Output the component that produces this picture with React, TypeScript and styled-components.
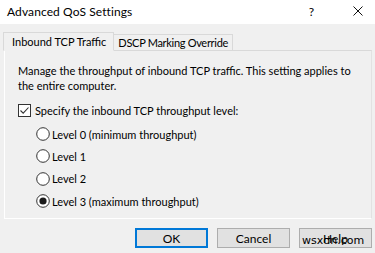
import styled, { createGlobalStyle } from "styled-components";

const GlobalStyle = createGlobalStyle`
  html, body {
    margin: 0;
    padding: 0;
    background: #f0f0f0;
  }
  body {
    font-family: Lato, "Liberation Sans", sans-serif;
    font-size: 11px;
    color: #000;
  }
`;

const levels = [
  "Level 0 (minimum throughput)",
  "Level 1",
  "Level 2",
  "Level 3 (maximum throughput)",
];

function App() {
  return (
    <Window>
      <GlobalStyle />
      <TitleBar>
        <Title>Advanced QoS Settings</Title>
        <TitleButtons>
          <HelpMark>?</HelpMark>
          <CloseIcon viewBox="0 0 10 10">
            <path d="M0.5 0.5 L9.5 9.5 M9.5 0.5 L0.5 9.5" stroke="#111" strokeWidth="1" />
          </CloseIcon>
        </TitleButtons>
      </TitleBar>
      <Body>
        <TabStrip>
          <Tab active>Inbound TCP Traffic</Tab>
          <Tab>DSCP Marking Override</Tab>
        </TabStrip>
        <Panel>
          <Description>
            Manage the throughput of inbound TCP traffic. This setting applies to
            the entire computer.
          </Description>
          <CheckRow>
            <CheckBox viewBox="0 0 13 13">
              <rect x="0.5" y="0.5" width="12" height="12" fill="#fff" stroke="#333" />
              <path d="M2.5 6.5 L5.2 9.2 L10.5 3.5" fill="none" stroke="#333" strokeWidth="1.1" />
            </CheckBox>
            <span>Specify the inbound TCP throughput level:</span>
          </CheckRow>
          <RadioList>
            {levels.map((label, i) => (
              <RadioRow key={label}>
                <Radio viewBox="0 0 14 14">
                  <circle cx="7" cy="7" r="6.3" fill="#fff" stroke="#333" strokeWidth="1" />
                  {i === 3 && <circle cx="7" cy="7" r="3.6" fill="#1a1a1a" />}
                </Radio>
                <span>{label}</span>
              </RadioRow>
            ))}
          </RadioList>
        </Panel>
        <ButtonRow>
          <Button primary>OK</Button>
          <Button>Cancel</Button>
          <Button>Help</Button>
        </ButtonRow>
        <Watermark>wsxdn.com</Watermark>
      </Body>
    </Window>
  );
}

const Window = styled.div`
  width: 375px;
  height: 253px;
  overflow: hidden;
  background: #f0f0f0;
  position: relative;
`;

const TitleBar = styled.div`
  height: 24px;
  box-sizing: border-box;
  background: #fff;
  display: flex;
  align-items: center;
  justify-content: space-between;
  padding: 0 12px 2px 7px;
`;

const Title = styled.span`
  font-size: 12px;
  letter-spacing: 0.1px;
`;

const TitleButtons = styled.div`
  display: flex;
  align-items: center;
  gap: 39px;
`;

const HelpMark = styled.span`
  font-size: 12px;
`;

const CloseIcon = styled.svg`
  width: 10px;
  height: 10px;
`;

const Body = styled.div`
  padding: 8px 3px 0 4px;
`;

const TabStrip = styled.div`
  display: flex;
  align-items: flex-end;
  height: 18px;
  margin-left: -1px;
`;

const Tab = styled.div<{ active?: boolean }>`
  height: ${(p) => (p.active ? 19 : 16)}px;
  display: flex;
  align-items: center;
  padding: ${(p) => (p.active ? "0 7px 1px 8px" : "0 4px")};
  letter-spacing: ${(p) => (p.active ? 0 : -0.3)}px;
  background: #f0f0f0;
  border: 1px solid #d9d9d9;
  border-bottom: ${(p) => (p.active ? "1px solid #f0f0f0" : "none")};
  margin-bottom: ${(p) => (p.active ? -1 : 0)}px;
  margin-left: ${(p) => (p.active ? 0 : -1)}px;
  position: relative;
  z-index: ${(p) => (p.active ? 1 : 0)};
  box-sizing: border-box;
`;

const Panel = styled.div`
  height: 169px;
  box-sizing: border-box;
  border: 1px solid #fff;
  border-top-color: #d9d9d9;
  border-right-color: #e2e2e2;
  padding: 12px 12px 0 13px;
`;

const Description = styled.p`
  margin: 0;
  line-height: 15px;
`;

const CheckRow = styled.label`
  display: flex;
  align-items: center;
  gap: 4px;
  margin-top: 10px;
  height: 15px;
`;

const CheckBox = styled.svg`
  width: 13px;
  height: 13px;
  flex: none;
`;

const RadioList = styled.div`
  display: flex;
  flex-direction: column;
  gap: 7.4px;
  margin-top: 8.5px;
  padding-left: 18px;
`;

const RadioRow = styled.label`
  display: flex;
  align-items: center;
  gap: 2px;
  height: 15px;
`;

const Radio = styled.svg`
  width: 14px;
  height: 14px;
  flex: none;
`;

const ButtonRow = styled.div`
  display: flex;
  justify-content: flex-end;
  gap: 9px;
  margin-top: 9px;
`;

const Button = styled.div<{ primary?: boolean }>`
  width: 73px;
  height: 20px;
  box-sizing: border-box;
  display: flex;
  align-items: center;
  justify-content: center;
  background: #e1e1e1;
  border: ${(p) => (p.primary ? "2px solid #0078d7" : "1px solid #adadad")};
  font-size: 12px;
`;

const Watermark = styled.span`
  position: absolute;
  left: 302px;
  top: 234px;
  font-family: "DejaVu Sans", sans-serif;
  font-size: 11px;
  line-height: 13px;
  color: #000;
`;

export default App;
